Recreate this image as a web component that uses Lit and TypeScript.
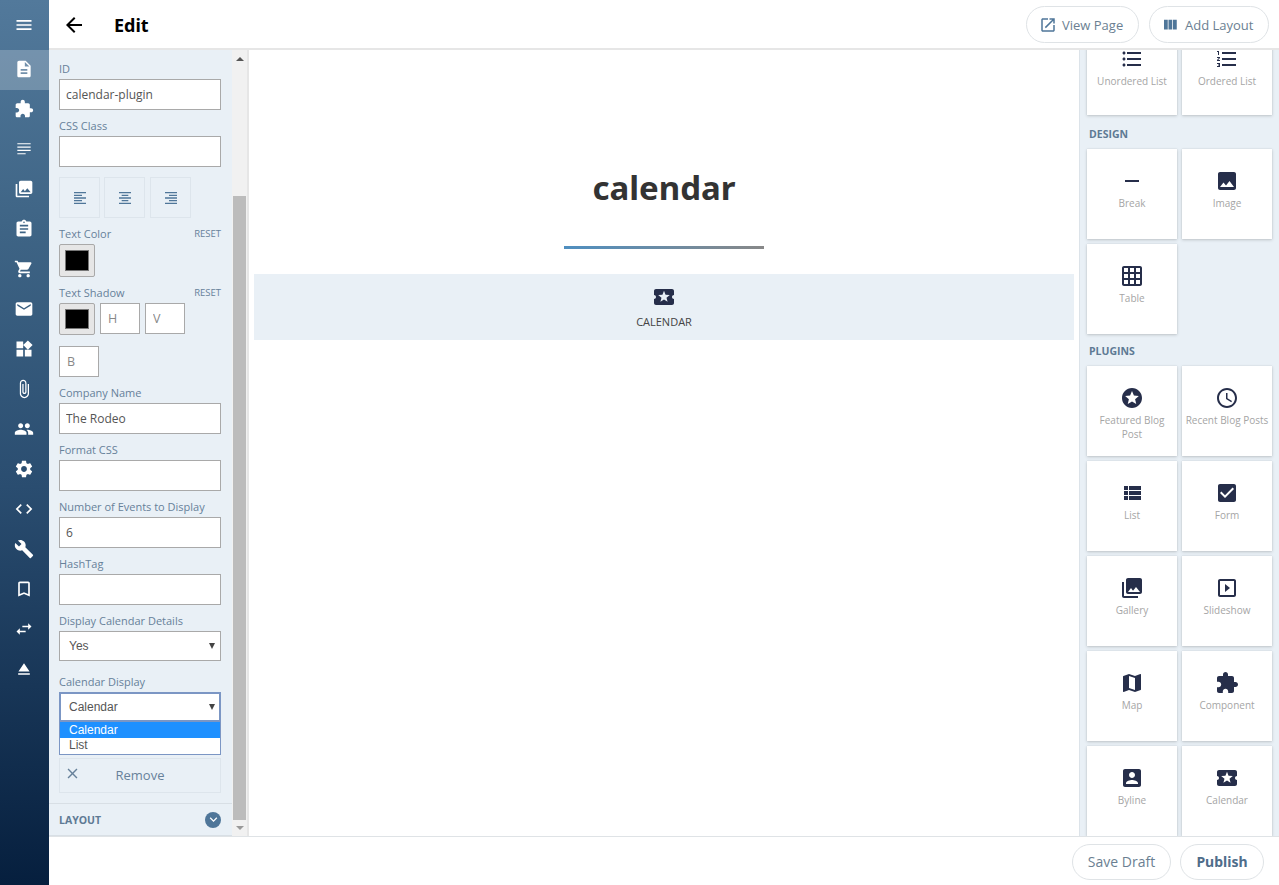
import { LitElement, html, css, svg } from "lit";
import { customElement } from "lit/decorators.js";

const P: Record<string, string> = {
  menu: "M3 18h18v-2H3v2zm0-5h18v-2H3v2zm0-7v2h18V6H3z",
  description: "M14 2H6c-1.1 0-1.99.9-1.99 2L4 20c0 1.1.89 2 1.99 2H18c1.1 0 2-.9 2-2V8l-6-6zm2 16H8v-2h8v2zm0-4H8v-2h8v2zm-3-5V3.5L18.5 9H13z",
  extension: "M20.5 11H19V7c0-1.1-.9-2-2-2h-4V3.5C13 2.12 11.88 1 10.5 1S8 2.12 8 3.5V5H4c-1.1 0-1.99.9-1.99 2v3.8H3.5c1.49 0 2.7 1.21 2.7 2.7s-1.21 2.7-2.7 2.7H2V20c0 1.1.9 2 2 2h3.8v-1.5c0-1.49 1.21-2.7 2.7-2.7 1.49 0 2.7 1.21 2.7 2.7V22H17c1.1 0 2-.9 2-2v-4h1.5c1.38 0 2.5-1.12 2.5-2.5S21.88 11 20.5 11z",
  subject: "M14 17H4v1.4h10V17zm6-8H4v1.4h16V9zM4 14.4h16V13H4v1.4zM4 5v1.4h16V5H4z",
  collections: "M22 16V4c0-1.1-.9-2-2-2H8c-1.1 0-2 .9-2 2v12c0 1.1.9 2 2 2h12c1.1 0 2-.9 2-2zm-11-4l2.03 2.71L16 11l4 5H8l3-4zM2 6v14c0 1.1.9 2 2 2h14v-2H4V6H2z",
  assignment: "M19 3h-4.18C14.4 1.84 13.3 1 12 1c-1.3 0-2.4.84-2.82 2H5c-1.1 0-2 .9-2 2v14c0 1.1.9 2 2 2h14c1.1 0 2-.9 2-2V5c0-1.1-.9-2-2-2zm-7 0c.55 0 1 .45 1 1s-.45 1-1 1-1-.45-1-1 .45-1 1-1zm2 14H7v-2h7v2zm3-4H7v-2h10v2zm0-4H7V7h10v2z",
  cart: "M7 18c-1.1 0-1.99.9-1.99 2S5.9 22 7 22s2-.9 2-2-.9-2-2-2zM1 2v2h2l3.6 7.59-1.35 2.45c-.16.28-.25.61-.25.96 0 1.1.9 2 2 2h12v-2H7.42c-.14 0-.25-.11-.25-.25l.03-.12.9-1.63h7.45c.75 0 1.41-.41 1.75-1.03l3.58-6.49c.08-.14.12-.31.12-.48 0-.55-.45-1-1-1H5.21l-.94-2H1zm16 16c-1.1 0-1.99.9-1.99 2s.89 2 1.99 2 2-.9 2-2-.9-2-2-2z",
  email: "M20 4H4c-1.1 0-1.99.9-1.99 2L2 18c0 1.1.9 2 2 2h16c1.1 0 2-.9 2-2V6c0-1.1-.9-2-2-2zm0 4l-8 5-8-5V6l8 5 8-5v2z",
  widgets: "M13 13v8h8v-8h-8zM3 21h8v-8H3v8zM3 3v8h8V3H3zm13.66-1.31L11 7.34 16.66 13l5.66-5.66-5.66-5.65z",
  attach: "M16.5 6v11.5c0 2.21-1.79 4-4 4s-4-1.79-4-4V5c0-1.38 1.12-2.5 2.5-2.5s2.5 1.12 2.5 2.5v10.5c0 .55-.45 1-1 1s-1-.45-1-1V6H10v9.5c0 1.38 1.12 2.5 2.5 2.5s2.5-1.12 2.5-2.5V5c0-2.21-1.79-4-4-4S7 2.79 7 5v12.5c0 3.04 2.46 5.5 5.5 5.5s5.5-2.46 5.5-5.5V6h-1.5z",
  people: "M16 11c1.66 0 2.99-1.34 2.99-3S17.66 5 16 5c-1.66 0-3 1.34-3 3s1.34 3 3 3zm-8 0c1.66 0 2.99-1.34 2.99-3S9.66 5 8 5C6.34 5 5 6.34 5 8s1.34 3 3 3zm0 2c-2.33 0-7 1.17-7 3.5V19h14v-2.5c0-2.33-4.67-3.5-7-3.5zm8 0c-.29 0-.62.02-.97.05 1.16.84 1.97 1.97 1.97 3.45V19h6v-2.5c0-2.33-4.67-3.5-7-3.5z",
  settings: "M19.43 12.98c.04-.32.07-.64.07-.98s-.03-.66-.07-.98l2.11-1.65c.19-.15.24-.42.12-.64l-2-3.46c-.12-.22-.39-.3-.61-.22l-2.49 1c-.52-.4-1.08-.73-1.69-.98l-.38-2.65C14.46 2.18 14.25 2 14 2h-4c-.25 0-.46.18-.49.42l-.38 2.65c-.61.25-1.17.59-1.69.98l-2.49-1c-.23-.09-.49 0-.61.22l-2 3.46c-.13.22-.07.49.12.64l2.11 1.65c-.04.32-.07.65-.07.98s.03.66.07.98l-2.11 1.65c-.19.15-.24.42-.12.64l2 3.46c.12.22.39.3.61.22l2.49-1c.52.4 1.08.73 1.69.98l.38 2.65c.03.24.24.42.49.42h4c.25 0 .46-.18.49-.42l.38-2.65c.61-.25 1.17-.59 1.69-.98l2.49 1c.23.09.49 0 .61-.22l2-3.46c.12-.22.07-.49-.12-.64l-2.11-1.65zM12 15.5c-1.93 0-3.5-1.57-3.5-3.5s1.57-3.5 3.5-3.5 3.5 1.57 3.5 3.5-1.57 3.5-3.5 3.5z",
  code: "M9.4 16.6L4.8 12l4.6-4.6L8 6l-6 6 6 6 1.4-1.4zm5.2 0l4.6-4.6-4.6-4.6L16 6l6 6-6 6-1.4-1.4z",
  build: "M22.7 19l-9.1-9.1c.9-2.3.4-5-1.5-6.9-2-2-5-2.4-7.4-1.3L9 6 6 9 1.6 4.7C.4 7.1.9 10.1 2.9 12.1c1.9 1.9 4.6 2.4 6.9 1.5l9.1 9.1c.4.4 1 .4 1.4 0l2.3-2.3c.5-.4.5-1.1.1-1.4z",
  bookmark: "M17 3H7c-1.1 0-1.99.9-1.99 2L5 21l7-3 7 3V5c0-1.1-.9-2-2-2zm0 15l-5-2.18L7 18V5h10v13z",
  swap: "M6.99 11L3 15l3.99 4v-3H14v-2H6.99v-3zM21 9l-3.99-4v3H10v2h7.01v3L21 9z",
  eject: "M5 17h14v2H5zm7-12L5.33 15h13.34z",
  back: "M20 11H7.83l5.59-5.59L12 4l-8 8 8 8 1.41-1.41L7.83 13H20v-2z",
  open: "M19 19H5V5h7V3H5c-1.11 0-2 .9-2 2v14c0 1.1.89 2 2 2h14c1.1 0 2-.9 2-2v-7h-2v7zM14 3v2h3.59l-9.83 9.83 1.41 1.41L19 6.41V10h2V3h-7z",
  columns: "M10 18h5V5h-5v13zm-6 0h5V5H4v13zM16 5v13h5V5h-5z",
  left: "M15 15H3v2h12v-2zm0-8H3v2h12V7zM3 13h18v-2H3v2zm0 8h18v-2H3v2zM3 3v2h18V3H3z",
  center: "M7 15v2h10v-2H7zm-4 6h18v-2H3v2zm0-8h18v-2H3v2zm4-6v2h10V7H7zM3 3v2h18V3H3z",
  right: "M3 21h18v-2H3v2zm6-4h12v-2H9v2zm-6-4h18v-2H3v2zm6-4h12V7H9v2zM3 3v2h18V3H3z",
  close: "M19 6.41L17.59 5 12 10.59 6.41 5 5 6.41 10.59 12 5 17.59 6.41 19 12 13.41 17.59 19 19 17.59 13.41 12z",
  bulleted: "M4 10.5c-.83 0-1.5.67-1.5 1.5s.67 1.5 1.5 1.5 1.5-.67 1.5-1.5-.67-1.5-1.5-1.5zm0-6c-.83 0-1.5.67-1.5 1.5S3.17 7.5 4 7.5 5.5 6.83 5.5 6 4.83 4.5 4 4.5zm0 12c-.83 0-1.5.68-1.5 1.5s.68 1.5 1.5 1.5 1.5-.68 1.5-1.5-.67-1.5-1.5-1.5zM7 19h14v-2H7v2zm0-6h14v-2H7v2zm0-8v2h14V5H7z",
  numbered: "M2 17h2v.5H3v1h1v.5H2v1h3v-4H2v1zm1-9h1V4H2v1h1v3zm-1 3h1.8L2 13.1v.9h3v-1H3.2L5 10.9V10H2v1zm5-6v2h14V5H7zm0 14h14v-2H7v2zm0-6h14v-2H7v2z",
  remove: "M19 13H5v-2h14v2z",
  image: "M21 19V5c0-1.1-.9-2-2-2H5c-1.1 0-2 .9-2 2v14c0 1.1.9 2 2 2h14c1.1 0 2-.9 2-2zM8.5 13.5l2.5 3.01L14.5 12l4.5 6H5l3.5-4.5z",
  grid: "M20 2H4c-1.1 0-2 .9-2 2v16c0 1.1.9 2 2 2h16c1.1 0 2-.9 2-2V4c0-1.1-.9-2-2-2zM8 20H4v-4h4v4zm0-6H4v-4h4v4zm0-6H4V4h4v4zm6 12h-4v-4h4v4zm0-6h-4v-4h4v4zm0-6h-4V4h4v4zm6 12h-4v-4h4v4zm0-6h-4v-4h4v4zm0-6h-4V4h4v4z",
  stars: "M11.99 2C6.47 2 2 6.48 2 12s4.47 10 9.99 10C17.52 22 22 17.52 22 12S17.52 2 11.99 2zm4.24 16L12 15.45 7.77 18l1.12-4.81-3.73-3.23 4.92-.42L12 5l1.92 4.53 4.92.42-3.73 3.23L16.23 18z",
  time: "M11.99 2C6.47 2 2 6.48 2 12s4.47 10 9.99 10C17.52 22 22 17.52 22 12S17.52 2 11.99 2zM12 20c-4.42 0-8-3.58-8-8s3.58-8 8-8 8 3.58 8 8-3.58 8-8 8zm.5-13H11v6l5.25 3.15.75-1.23-4.5-2.67z",
  viewlist: "M4 14h4v-4H4v4zm0 5h4v-4H4v4zM4 9h4V5H4v4zm5 5h12v-4H9v4zm0 5h12v-4H9v4zM9 5v4h12V5H9z",
  check: "M19 3H5c-1.11 0-2 .9-2 2v14c0 1.1.89 2 2 2h14c1.11 0 2-.9 2-2V5c0-1.1-.89-2-2-2zm-9 14l-5-5 1.41-1.41L10 14.17l7.59-7.59L19 8l-9 9z",
  slideshow: "M10 8v8l5-4-5-4zm9-5H5c-1.1 0-2 .9-2 2v14c0 1.1.9 2 2 2h14c1.1 0 2-.9 2-2V5c0-1.1-.9-2-2-2zm0 16H5V5h14v14z",
  map: "M20.5 3l-.16.03L15 5.1 9 3 3.36 4.9c-.21.07-.36.25-.36.48V20.5c0 .28.22.5.5.5l.16-.03L9 18.9l6 2.1 5.64-1.9c.21-.07.36-.25.36-.48V3.5c0-.28-.22-.5-.5-.5zM15 19l-6-2.11V5l6 2.11V19z",
  account: "M3 5v14c0 1.1.89 2 2 2h14c1.1 0 2-.9 2-2V5c0-1.1-.9-2-2-2H5c-1.11 0-2 .9-2 2zm12 4c0 1.66-1.34 3-3 3s-3-1.34-3-3 1.34-3 3-3 3 1.34 3 3zm-9 8c0-2 4-3.1 6-3.1s6 1.1 6 3.1v1H6v-1z",
  activity: "M20 12c0-1.1.9-2 2-2V6c0-1.1-.9-2-2-2H4c-1.1 0-1.99.9-1.99 2v4c1.1 0 1.99.9 1.99 2s-.89 2-2 2v4c0 1.1.9 2 2 2h16c1.1 0 2-.9 2-2v-4c-1.1 0-2-.9-2-2zm-4.42 4.8L12 14.5l-3.58 2.3 1.08-4.12-3.29-2.69 4.24-.25L12 5.8l1.54 3.95 4.24.25-3.29 2.69 1.09 4.11z",
  chevron: "M7.41 8.59L12 13.17l4.59-4.58L18 10l-6 6-6-6z",
};

const icon = (name: string, cls = "") => html`<svg class="ic ${cls}" viewBox="0 0 24 24" aria-hidden="true">${svg`<path d=${P[name]}></path>`}</svg>`;

const RAIL = ["description", "extension", "subject", "collections", "assignment", "cart", "email", "widgets", "attach", "people", "settings", "code", "build", "bookmark", "swap", "eject"];

const TOP_CARDS = [["bulleted", "Unordered List"], ["numbered", "Ordered List"]];
const DESIGN = [["remove", "Break"], ["image", "Image"], ["grid", "Table"]];
const PLUGINS = [
  ["stars", "Featured Blog Post"], ["time", "Recent Blog Posts"], ["viewlist", "List"], ["check", "Form"],
  ["collections", "Gallery"], ["slideshow", "Slideshow"], ["map", "Map"], ["extension", "Component"],
  ["account", "Byline"], ["activity", "Calendar"],
];

@customElement("app-root")
export class AppRoot extends LitElement {
  static styles = css`
    :host { display: block; height: 885px; font-family: "Open Sans", sans-serif; color: #4f6d8a; overflow: hidden; }
    * { box-sizing: border-box; }
    .ic { width: 24px; height: 24px; fill: currentColor; display: block; flex: none; }
    .app { display: flex; height: 885px; }
    .rail { width: 49px; flex: none; background: linear-gradient(180deg, #52799b 0%, #3f6586 25%, #2a4d70 55%, #061f3e 100%); color: #fff; }
    .rail-top { height: 50px; display: flex; align-items: center; justify-content: center; padding-right: 1px; }
    .rail-item { height: 40px; display: flex; align-items: center; justify-content: center; padding: 0 1px 2px 0; }
    .rail-item.active { background: rgba(255,255,255,.22); }
    .rail .ic { width: 20px; height: 20px; }
    .shell { flex: 1; min-width: 0; display: flex; flex-direction: column; }
    .head { height: 50px; flex: none; display: flex; align-items: center; border-bottom: 2px solid #e6e6e6; padding: 0 10px 0 13px; }
    .back { color: #000; margin-top: 2px; }
    .title { font-size: 18px; font-weight: 700; color: #000; margin: 2px 0 0 28px; flex: 1; font-family: "Noto Sans", sans-serif; }
    .pill { height: 37px; border: 1px solid #dfe3e6; border-radius: 19px; background: #fff; display: flex; align-items: center; font-size: 14px; color: #6b7f92; white-space: nowrap; }
    .pill .ic { width: 18px; height: 18px; color: #4f7699; }
    .pill.view { width: 113px; margin: 1px 10px 0 0; padding-left: 12px; gap: 5px; font-size: 13px; }
    .pill.add { width: 120px; margin-top: 1px; padding-left: 11px; gap: 6px; font-size: 13px; }
    .pill.draft { width: 99px; margin-right: 9px; height: 36px; justify-content: center; }
    .pill.pub { width: 84px; height: 36px; justify-content: center; font-weight: 700; color: #4f6d8a; font-family: "Noto Sans", sans-serif; }
    .body { flex: 1; min-height: 0; display: flex; }
    .panel { width: 183px; flex: none; background: #e9f0f6; display: flex; flex-direction: column; }
    .form { flex: 1; min-height: 0; padding: 9px 11px 0 10px; }
    .lab { display: block; height: 20px; line-height: 20px; font-size: 11px; color: #67819a; white-space: nowrap; }
    .lab-row { display: flex; justify-content: space-between; align-items: center; height: 20px; }
    .reset { font-size: 9.5px; color: #67819a; line-height: 18px; }
    .field { margin-bottom: 6px; position: relative; }
    .inp { display: block; width: 100%; height: 31px; border: 1px solid #a9a9a9; background: #fff; padding: 0 6px; font: 12px "Open Sans", sans-serif; color: #555; outline: none; border-radius: 0; }
    .inp::placeholder { color: #888; opacity: 1; }
    .inp.small { width: 40px; padding-left: 7px; font-size: 12.5px; }
    .aligns { display: flex; gap: 4px; margin: 10px 0 6px; }
    .al { width: 41px; height: 41px; border: 1px solid #dde5ec; display: flex; align-items: center; justify-content: center; color: #4f7699; }
    .al:last-child { margin-left: 1px; }
    .al .ic { width: 16px; height: 16px; }
    .swatch { width: 36px; height: 33px; border: 1px solid #a9a9a9; background: #e6e6e6; border-radius: 2px; padding: 5px; flex: none; }
    .swatch i { display: block; height: 100%; background: #000; border: 1px solid #777; }
    .shadow { display: flex; gap: 5px; flex-wrap: wrap; row-gap: 11px; margin-bottom: 6px; }
    .shadow .swatch { height: 32px; }
    .sel { height: 30px; border: 1px solid #a9a9a9; background: #fff; display: flex; align-items: center; justify-content: space-between; padding: 0 5px 0 9px; font: 12px "Liberation Sans", Arial, sans-serif; color: #555; }
    .sel.focus { border-color: #7b96c4; box-shadow: inset 0 0 0 1px #7b96c4; }
    .arrow { width: 0; height: 0; border-left: 3.5px solid transparent; border-right: 3.5px solid transparent; border-top: 6px solid #444; }
    .opts { position: absolute; left: 0; right: 0; top: 50px; height: 33px; background: #fff; border: 1px solid #7b96c4; border-top: 0; font: 12px/15px "Liberation Sans", Arial, sans-serif; color: #555; z-index: 2; }
    .opt { height: 15px; padding-left: 9px; }
    .opt.sel-o { background: #1e90ff; color: #fff; height: 16px; line-height: 16px; }
    .spaced { margin-bottom: 36px; }
    .rem { height: 35px; border: 1px solid #dde5ec; display: flex; align-items: center; position: relative; justify-content: center; font-size: 13px; color: #67819a; padding-bottom: 2px; }
    .rem .ic { position: absolute; left: 4px; top: 6px; width: 17px; height: 17px; }
    .layout { height: 33px; flex: none; margin-top: 10px; border-top: 1px solid #d8dfe5; border-bottom: 1px solid #d8dfe5; display: flex; align-items: center; justify-content: space-between; padding: 0 11px 0 10px; font-size: 10.5px; font-weight: 700; color: #5e7a94; }
    .circle { width: 16px; height: 16px; border-radius: 50%; background: #4f7699; color: #fff; display: flex; align-items: center; justify-content: center; }
    .circle .ic { width: 15px; height: 15px; }
    .sb { width: 16px; flex: none; background: #f1f1f1; display: flex; flex-direction: column; align-items: center; border-right: 1px solid #e6e6e6; }
    .sb-up, .sb-down { width: 0; height: 0; border-left: 4px solid transparent; border-right: 4px solid transparent; }
    .sb-up { border-bottom: 4px solid #555; margin: 7px 0 135px; }
    .sb-thumb { width: 13px; flex: 1; background: #bcbcbc; }
    .sb-down { border-top: 4px solid #999; margin: 6px 0 6px; }
    .canvas { flex: 1; min-width: 0; padding: 0 5px; display: flex; flex-direction: column; align-items: stretch; border-left: 1px solid #e6e6e6; }
    .h1 { margin: 112px 0 0; height: 52px; line-height: 52px; text-align: center; font-size: 33px; font-weight: 700; color: #333; font-family: "Noto Sans", sans-serif; }
    .rule { width: 200px; height: 3px; margin: 32px auto 0; background: linear-gradient(90deg, #4f8fc0, #888); }
    .plug { margin-top: 25px; height: 66px; background: #e9f0f6; display: flex; flex-direction: column; align-items: center; padding-top: 11px; color: #444; font-size: 11px; }
    .plug .ic { width: 24px; height: 24px; color: #262e4a; }
    .plug span { margin-top: 5px; line-height: 16px; }
    .lib { width: 200px; flex: none; background: #e9f0f6; border-left: 1px solid #dce3e9; padding: 0 7px; overflow: hidden; }
    .grid { display: grid; grid-template-columns: 90px 90px; gap: 5px; }
    .grid.first { margin-top: -23px; }
    .grid.first .card { height: 88px; }
    .card { height: 90px; background: #fff; box-shadow: 0 1px 3px rgba(0,0,0,.18), 0 0 1px rgba(0,0,0,.12); display: flex; flex-direction: column; align-items: center; padding: 20px 2px 0; text-align: center; font-size: 10px; line-height: 14px; color: #a5a5a5; }
    .card .ic { width: 24px; height: 24px; color: #262e4a; margin: 0 1px 3px 0; }
    .sect { height: 34px; display: flex; align-items: flex-end; padding: 0 0 8px 2px; font-size: 10.5px; font-weight: 700; color: #5e7a94; }
    .sect.tight { height: 32px; }
    .foot { height: 49px; flex: none; border-top: 1px solid #dfe3e6; display: flex; justify-content: flex-end; align-items: center; padding: 1px 15px 0 0; }
  `;

  private card(c: string[]) {
    return html`<div class="card">${icon(c[0])}<span>${c[1]}</span></div>`;
  }

  private field(label: string, value = "") {
    return html`<div class="field"><label class="lab">${label}</label><input class="inp" .value=${value} /></div>`;
  }

  render() {
    return html`<div class="app">
      <nav class="rail">
        <div class="rail-top">${icon("menu")}</div>
        ${RAIL.map((n, i) => html`<div class="rail-item ${i === 0 ? "active" : ""}">${icon(n)}</div>`)}
      </nav>
      <div class="shell">
        <header class="head">
          <span class="back">${icon("back")}</span>
          <span class="title">Edit</span>
          <div class="pill view">${icon("open")}View Page</div>
          <div class="pill add">${icon("columns")}Add Layout</div>
        </header>
        <div class="body">
          <aside class="panel">
            <div class="form">
              ${this.field("ID", "calendar-plugin")}
              ${this.field("CSS Class")}
              <div class="aligns">
                <div class="al">${icon("left")}</div>
                <div class="al">${icon("center")}</div>
                <div class="al">${icon("right")}</div>
              </div>
              <div class="lab-row"><span class="lab">Text Color</span><span class="reset">RESET</span></div>
              <div class="swatch"><i></i></div>
              <div class="lab-row" style="margin-top:6px"><span class="lab">Text Shadow</span><span class="reset">RESET</span></div>
              <div class="shadow">
                <div class="swatch"><i></i></div>
                <input class="inp small" placeholder="H" />
                <input class="inp small" placeholder="V" />
                <input class="inp small" placeholder="B" />
              </div>
              ${this.field("Company Name", "The Rodeo")}
              ${this.field("Format CSS")}
              ${this.field("Number of Events to Display", "6")}
              ${this.field("HashTag")}
              <div class="field" style="margin-bottom:11px"><label class="lab">Display Calendar Details</label>
                <div class="sel">Yes<i class="arrow"></i></div></div>
              <div class="field spaced"><label class="lab">Calendar Display</label>
                <div class="sel focus">Calendar<i class="arrow"></i></div>
                <div class="opts"><div class="opt sel-o">Calendar</div><div class="opt">List</div></div>
              </div>
              <div class="rem">${icon("close")}Remove</div>
            </div>
            <div class="layout">LAYOUT<span class="circle">${icon("chevron")}</span></div>
          </aside>
          <div class="sb"><i class="sb-up"></i><div class="sb-thumb"></div><i class="sb-down"></i></div>
          <main class="canvas">
            <h1 class="h1">calendar</h1>
            <div class="rule"></div>
            <div class="plug">${icon("activity")}<span>CALENDAR</span></div>
          </main>
          <aside class="lib">
            <div class="grid first">${TOP_CARDS.map((c) => this.card(c))}</div>
            <div class="sect">DESIGN</div>
            <div class="grid">${DESIGN.map((c) => this.card(c))}</div>
            <div class="sect tight">PLUGINS</div>
            <div class="grid">${PLUGINS.map((c) => this.card(c))}</div>
          </aside>
        </div>
        <footer class="foot">
          <div class="pill draft">Save Draft</div>
          <div class="pill pub">Publish</div>
        </footer>
      </div>
    </div>`;
  }
}
